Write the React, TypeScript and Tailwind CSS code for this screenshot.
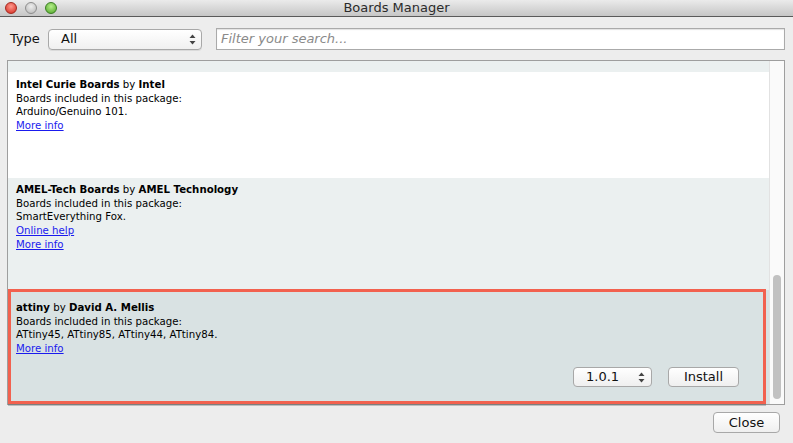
import React from "react";

const ui = { fontFamily: '"DejaVu Sans", "Liberation Sans", sans-serif' };

function Arrows() {
  return (
    <svg width="7" height="11" viewBox="0 0 7 11" className="shrink-0">
      <path d="M3.5 0.5 L6.5 4 L0.5 4 Z" fill="#444" />
      <path d="M3.5 10.5 L6.5 7 L0.5 7 Z" fill="#444" />
    </svg>
  );
}

function Light({ from, to, border }: { from: string; to: string; border: string }) {
  return (
    <div
      className="w-[12px] h-[12px] rounded-full border"
      style={{ background: `radial-gradient(circle at 50% 35%, ${from}, ${to})`, borderColor: border }}
    />
  );
}

function Item({
  cls,
  name,
  author,
  lines,
  links,
  children,
}: {
  cls: string;
  name: string;
  author: string;
  lines: string[];
  links: string[];
  children?: React.ReactNode;
}) {
  return (
    <div className={`${cls} relative pl-[8px] text-[10.2px] leading-[13.7px] text-black shrink-0`} style={ui}>
      <div>
        <span className="font-bold">{name}</span> by <span className="font-bold">{author}</span>
      </div>
      {lines.map((l) => (
        <div key={l}>{l}</div>
      ))}
      {links.map((l) => (
        <div key={l}>
          <span className="text-[#1a1aee] underline">{l}</span>
        </div>
      ))}
      {children}
    </div>
  );
}

export default function App() {
  return (
    <div className="w-[793px] h-[443px] bg-[#ededed] flex flex-col overflow-hidden" style={ui}>
      {/* Title bar */}
      <div className="h-[17px] shrink-0 relative flex items-center bg-gradient-to-b from-[#ebebeb] to-[#c6c6c6] border-b border-[#5a5a5a]">
        <div className="flex gap-[8px] pl-[5px]">
          <Light from="#ff9a8e" to="#d4271c" border="#a3291f" />
          <Light from="#eeeeee" to="#b5b5b5" border="#8e8e8e" />
          <Light from="#b6ef8a" to="#4ea426" border="#3a7d22" />
        </div>
        <div className="absolute inset-0 flex items-center justify-center text-[13px] text-[#2b2b2b]">Boards Manager</div>
      </div>

      {/* Toolbar */}
      <div className="h-[43px] shrink-0 flex items-center pl-[10px] pr-[8px] pt-[1px]">
        <span className="text-[13px] text-[#111] w-[38px]">Type</span>
        <div className="w-[154px] h-[21px] rounded-[4px] border border-[#a8a8a8] bg-gradient-to-b from-white to-[#f0f0f0] flex items-center pl-[12px] pr-[5px] shadow-[0_1px_0_rgba(0,0,0,0.08)]">
          <span className="flex-1 text-[13px] text-[#111]">All</span>
          <Arrows />
        </div>
        <div className="ml-[14px] flex-1 h-[22px] border border-[#aaaaaa] bg-white flex items-center pl-[4px] shadow-[inset_0_1px_1px_rgba(0,0,0,0.12)]">
          <span className="text-[13px] italic text-[#8a8a8a]">Filter your search...</span>
        </div>
      </div>

      {/* List */}
      <div className="mx-[7px] mr-[8px] h-[345px] shrink-0 border border-[#9e9e9e] flex overflow-hidden">
        <div className="flex-1 flex flex-col overflow-hidden">
          <div className="h-[11px] shrink-0 bg-[#ebf0f0]" />
          <Item
            cls="bg-white h-[106px] pt-[6px]"
            name="Intel Curie Boards"
            author="Intel"
            lines={["Boards included in this package:", "Arduino/Genuino 101."]}
            links={["More info"]}
          />
          <Item
            cls="bg-[#ebf0f0] h-[112px] pt-[5px]"
            name="AMEL-Tech Boards"
            author="AMEL Technology"
            lines={["Boards included in this package:", "SmartEverything Fox."]}
            links={["Online help", "More info"]}
          />
          <Item
            cls="bg-[#d9e2e3] h-[114px] pt-[11px]"
            name="attiny"
            author="David A. Mellis"
            lines={["Boards included in this package:", "ATtiny45, ATtiny85, ATtiny44, ATtiny84."]}
            links={["More info"]}
          >
            <div className="absolute left-[565px] top-[77px] flex gap-[16px]">
              <div className="w-[79px] h-[20px] rounded-[4px] border border-[#a8a8a8] bg-gradient-to-b from-white to-[#efefef] flex items-center pl-[12px] pr-[6px] text-[13px] text-[#111]">
                <span className="flex-1">1.0.1</span>
                <Arrows />
              </div>
              <div className="w-[71px] h-[20px] rounded-[4px] border border-[#a8a8a8] bg-gradient-to-b from-white to-[#efefef] flex items-center justify-center text-[13px] text-[#111]">
                Install
              </div>
            </div>
          </Item>
          <div className="flex-1 bg-[#d9e2e3]" />
        </div>
        {/* Scrollbar */}
        <div className="w-[15px] shrink-0 bg-[#fafafa] border-l border-[#e2e2e2] relative">
          <div className="absolute left-[3px] w-[8px] top-[214px] h-[124px] rounded-full bg-[#c1c1c1]" />
        </div>
        {/* Red highlight */}
        <div className="absolute left-[8px] top-[289px] w-[758px] h-[115px] border-[3px] border-[#f2614f] shadow-[0_2px_0_rgba(0,0,0,0.2)] pointer-events-none" />
      </div>

      {/* Footer */}
      <div className="flex-1 flex justify-end items-start pt-[7px] pr-[13px]">
        <div className="w-[67px] h-[21px] rounded-[4px] border border-[#a8a8a8] bg-gradient-to-b from-white to-[#efefef] flex items-center justify-center text-[13px] text-[#111]">
          Close
        </div>
      </div>
    </div>
  );
}
